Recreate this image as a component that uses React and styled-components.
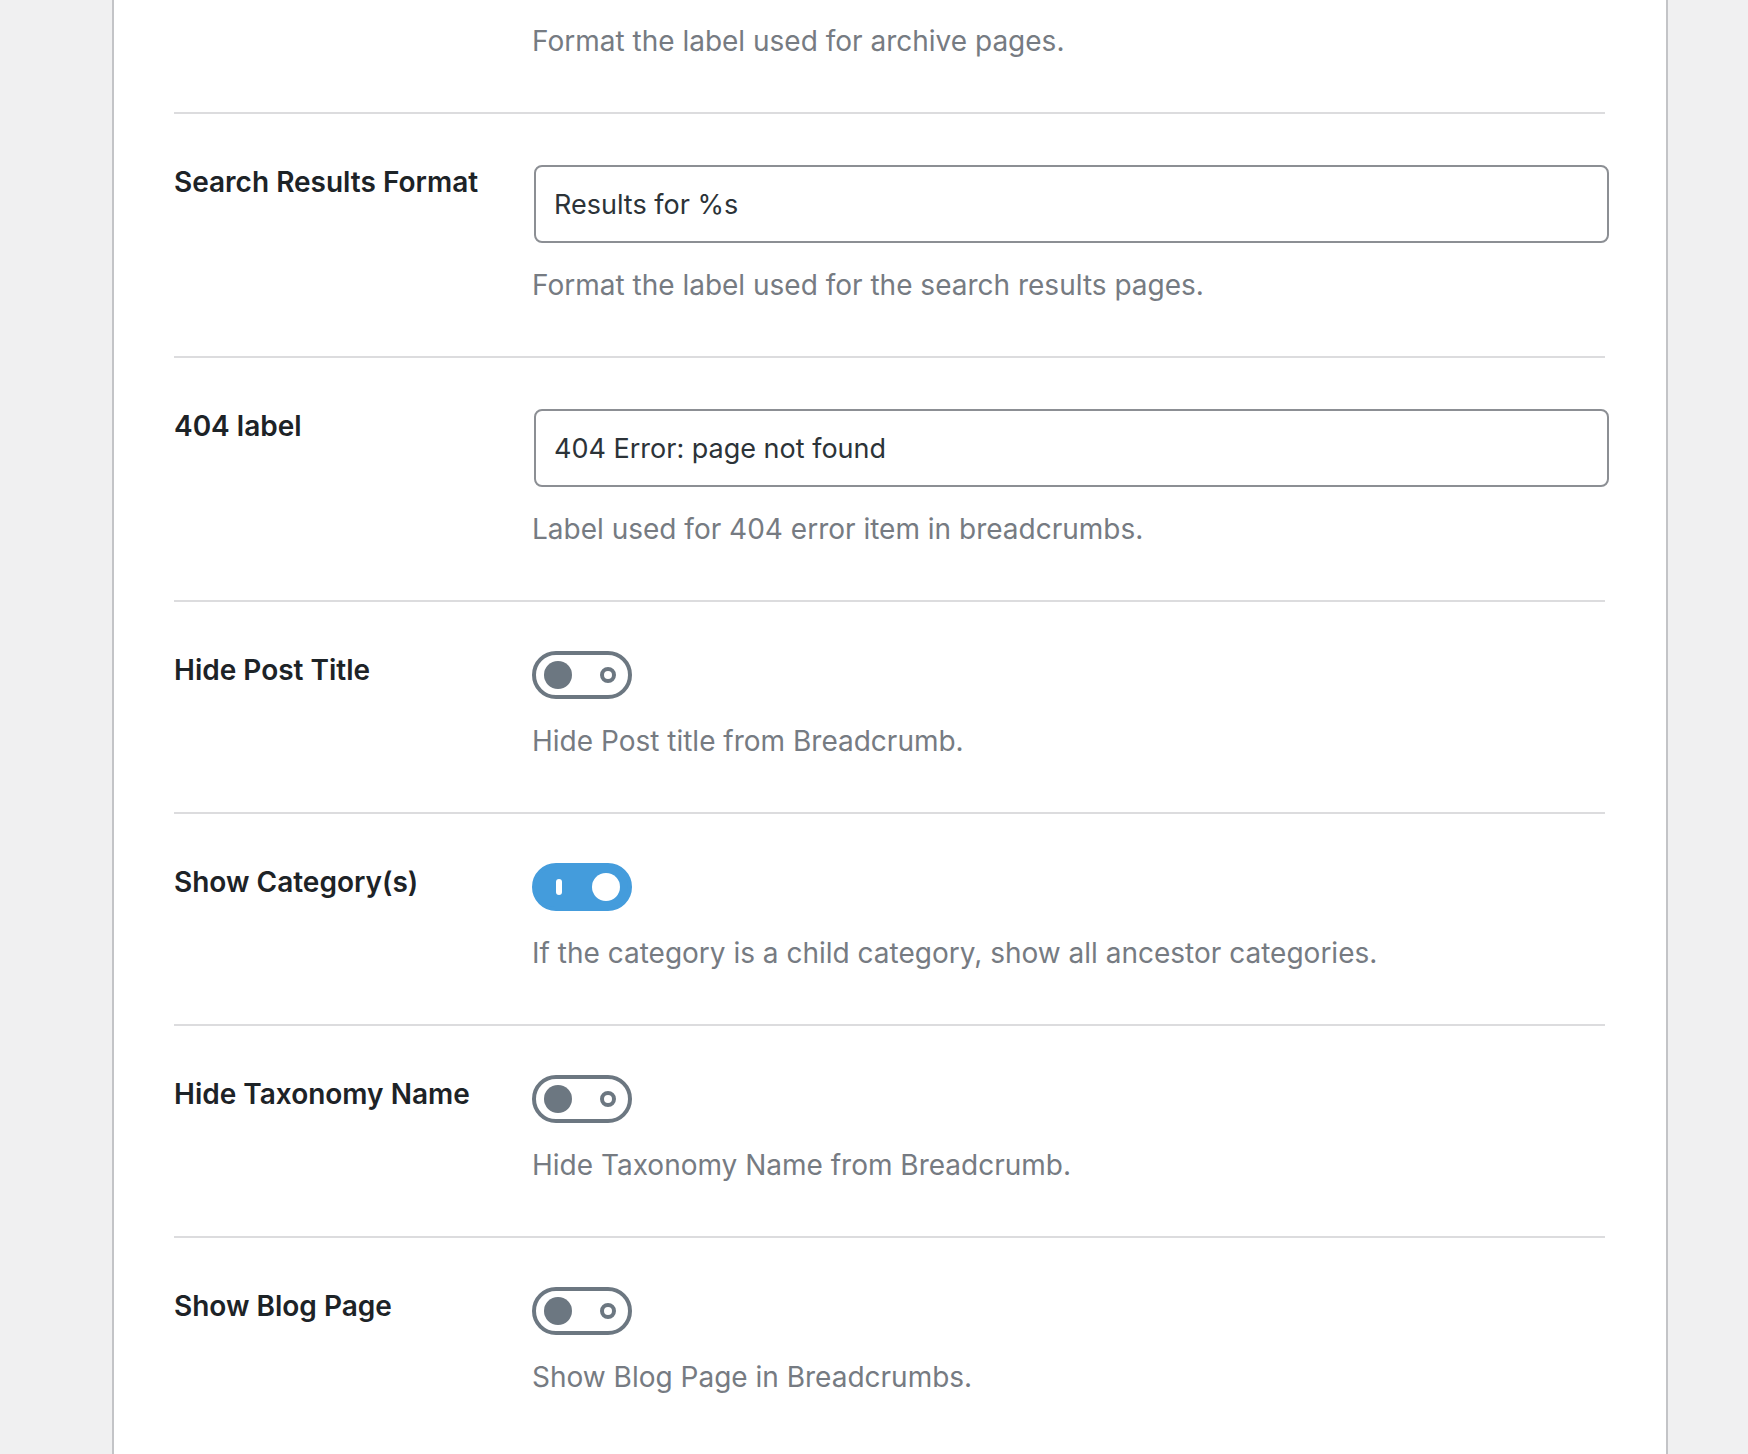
import React from 'react'
import styled, { createGlobalStyle } from 'styled-components'

const GlobalStyle = createGlobalStyle`
    * { box-sizing: border-box; }
    html, body {
        margin: 0;
        padding: 0;
        background: #f0f0f1;
        font-family: Inter, "Noto Sans", "Liberation Sans", sans-serif;
        color: #1d2327;
    }
`

const settings = [
    { type: 'text', label: 'Search Results Format', value: 'Results for %s', help: 'Format the label used for the search results pages.' },
    { type: 'text', label: '404 label', value: '404 Error: page not found', help: 'Label used for 404 error item in breadcrumbs.' },
    { type: 'toggle', label: 'Hide Post Title', checked: false, help: 'Hide Post title from Breadcrumb.' },
    { type: 'toggle', label: 'Show Category(s)', checked: true, help: 'If the category is a child category, show all ancestor categories.' },
    { type: 'toggle', label: 'Hide Taxonomy Name', checked: false, help: 'Hide Taxonomy Name from Breadcrumb.' },
    { type: 'toggle', label: 'Show Blog Page', checked: false, help: 'Show Blog Page in Breadcrumbs.' },
]

const Toggle = ({ checked }) => (
    <ToggleTrack $checked={checked}>
        {checked ? (
            <>
                <OnBar />
                <Knob $checked />
            </>
        ) : (
            <>
                <Knob />
                <OffRing />
            </>
        )}
    </ToggleTrack>
)

const App = () => {
    return (
        <>
            <GlobalStyle />
            <Page>
                <Card>
                    <TopRow>
                        <span />
                        <Help>Format the label used for archive pages.</Help>
                    </TopRow>
                    {settings.map((s) => (
                        <Row key={s.label}>
                            <Label>{s.label}</Label>
                            <Field>
                                {s.type === 'text'
                                    ? <TextInput defaultValue={s.value} />
                                    : <Toggle checked={s.checked} />}
                                <Help $gap={s.type === 'text' ? 22 : 22}>{s.help}</Help>
                            </Field>
                        </Row>
                    ))}
                </Card>
            </Page>
        </>
    )
}

const Page = styled.div`
    min-height: 100vh;
    display: flex;
`

const Card = styled.div`
    margin-left: 112px;
    width: 1556px;
    min-height: 100vh;
    background: #fff;
    border-left: 2px solid #c3c4c7;
    border-right: 2px solid #c3c4c7;
    padding: 0 61px 0 60px;
`

const TopRow = styled.div`
    display: grid;
    grid-template-columns: 358px 1fr;
    padding: 21px 0 51px;
`

const Row = styled.div`
    display: grid;
    grid-template-columns: 358px 1fr;
    border-top: 2px solid #dcdcde;
    padding: 49px 0 51px;
`

const Label = styled.div`
    font-size: 28px;
    font-weight: 600;
    line-height: 40px;
    margin-top: -1px;
    color: #1d2327;
`

const Field = styled.div`
    display: flex;
    flex-direction: column;
    align-items: flex-start;
`

const TextInput = styled.input`
    width: calc(100% + 2px);
    height: 78px;
    margin: 2px 0 0 2px;
    padding: 0 18px;
    border: 2px solid #8c8f94;
    border-radius: 8px;
    font-family: inherit;
    font-size: 27px;
    color: #2c3338;
    background: #fff;
    outline: none;
`

const Help = styled.p`
    margin: ${(p) => p.$gap || 0}px 0 0;
    font-size: 28px;
    line-height: 40px;
    color: #767b82;
`

const ToggleTrack = styled.div`
    width: 100px;
    height: 48px;
    border-radius: 24px;
    border: 4px solid ${(p) => (p.$checked ? '#449cdc' : '#6c7781')};
    background: ${(p) => (p.$checked ? '#449cdc' : '#fff')};
    display: flex;
    align-items: center;
    justify-content: space-between;
    padding: ${(p) => (p.$checked ? '0 8px 0 20px' : '0 12px 0 8px')};
`

const Knob = styled.span`
    width: 28px;
    height: 28px;
    border-radius: 50%;
    background: ${(p) => (p.$checked ? '#fff' : '#6c7781')};
`

const OffRing = styled.span`
    width: 16px;
    height: 16px;
    border-radius: 50%;
    border: 4px solid #6c7781;
`

const OnBar = styled.span`
    width: 6px;
    height: 16px;
    border-radius: 3px;
    background: #fff;
`

export default App
